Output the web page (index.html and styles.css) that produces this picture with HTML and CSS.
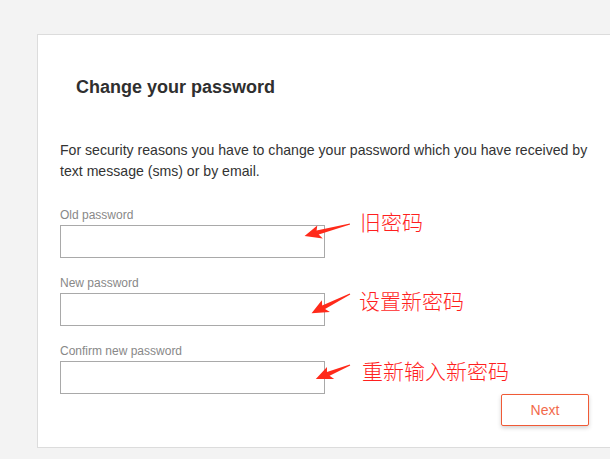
FILE: index.html
```html
<!DOCTYPE html>
<html>
<head>
<meta charset="utf-8">
<link rel="stylesheet" href="styles.css">
</head>
<body>
<div class="card">
  <h1 class="title">Change your password</h1>
  <p class="intro">For security reasons you have to change your password which you have received by text message (sms) or by email.</p>
  <div class="field">
    <label class="label">Old password</label>
    <input class="input" type="password">
  </div>
  <div class="field">
    <label class="label">New password</label>
    <input class="input" type="password">
  </div>
  <div class="field">
    <label class="label">Confirm new password</label>
    <input class="input" type="password">
  </div>
  <div class="actions">
    <button class="next">Next</button>
  </div>
</div>

<div class="markup">
  <svg class="arrows" width="610" height="459" viewBox="0 0 610 459">
    <g fill="#ff2a1a">
      <polygon transform="translate(350 224) rotate(165.1)" points="0,-0.6 33,-2.2 30,-7 47,0 32,7 34,2.2 0,0.6"/>
      <polygon transform="translate(350 294) rotate(153.4)" points="0,-0.6 29,-2.2 26,-7 43,0 28,7 30,2.2 0,0.6"/>
      <polygon transform="translate(350 365) rotate(157.6)" points="0,-0.6 23,-2.2 20,-7 37,0 22,7 24,2.2 0,0.6"/>
    </g>
  </svg>
  <span class="note note-1">旧密码</span>
  <span class="note note-2">设置新密码</span>
  <span class="note note-3">重新输入新密码</span>
</div>
</body>
</html>
```

FILE: styles.css
```css
html, body {
  margin: 0;
  padding: 0;
}
body {
  background: #f3f3f3;
  font-family: "Liberation Sans", Arial, sans-serif;
  color: #333;
  width: 610px;
  height: 459px;
  overflow: hidden;
  position: relative;
}
.card {
  box-sizing: border-box;
  margin: 34px 0 0 37px;
  width: 575px;
  height: 414px;
  background: #fff;
  border: 1px solid #dcdcdc;
  padding: 0 22px;
  display: flex;
  flex-direction: column;
}
.title {
  margin: 42px 0 0 16px;
  font-size: 18px;
  line-height: 21px;
  font-weight: bold;
  color: #2f2f2f;
}
.intro {
  margin: 42px 0 0 0;
  font-size: 14.1px;
  line-height: 21px;
  color: #333;
}
.field {
  display: flex;
  flex-direction: column;
  margin-top: 25px;
}
.field + .field {
  margin-top: 17px;
}
.label {
  font-size: 12px;
  line-height: 16px;
  color: #888;
  margin-bottom: 2px;
}
.input {
  box-sizing: border-box;
  width: 265px;
  height: 33px;
  margin: 0;
  border: 1px solid #a9a9a9;
  border-radius: 0;
  background: #fff;
  outline: none;
}
.actions {
  display: flex;
  justify-content: flex-end;
  width: 529px;
}
.next {
  box-sizing: border-box;
  width: 88px;
  height: 32px;
  margin: 0;
  background: #fff;
  border: 1px solid #f05a36;
  border-radius: 2px;
  box-shadow: 0 2px 4px rgba(0,0,0,0.18);
  color: #f26a4b;
  font-family: "Liberation Sans", Arial, sans-serif;
  font-size: 14px;
  padding: 0;
}
.markup {
  position: absolute;
  left: 0;
  top: 0;
  width: 610px;
  height: 459px;
  pointer-events: none;
}
.arrows {
  position: absolute;
  left: 0;
  top: 0;
}
.note {
  position: absolute;
  font-family: "Noto Sans CJK SC", "Microsoft YaHei", sans-serif;
  font-size: 21px;
  line-height: 24px;
  font-weight: 300;
  color: #ff1f1f;
  white-space: nowrap;
}
.note-1 { left: 360px; top: 209px; }
.note-2 { left: 359px; top: 288px; }
.note-3 { left: 362px; top: 358px; }
```
